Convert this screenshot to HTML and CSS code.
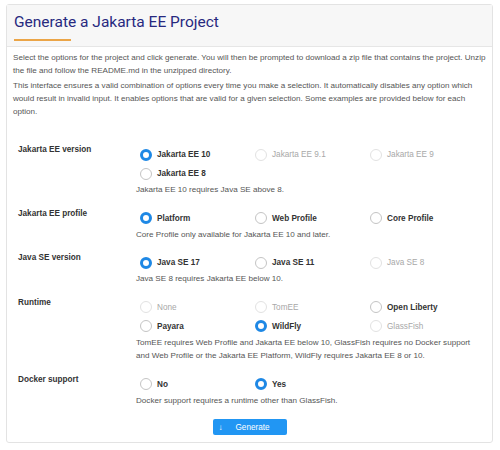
FILE: index.html
```html
<!DOCTYPE html>
<html>
<head>
<meta charset="utf-8">
<link rel="stylesheet" href="styles.css">
</head>
<body>
<div class="card">
  <div class="card-header">
    <h1>Generate a Jakarta EE Project</h1>
    <div class="accent"></div>
  </div>
  <div class="card-body">
    <p>Select the options for the project and click generate. You will then be prompted to download a zip file that contains the project. Unzip the file and follow the README.md in the unzipped directory.</p>
    <p>This interface ensures a valid combination of options every time you make a selection. It automatically disables any option which would result in invalid input. It enables options that are valid for a given selection. Some examples are provided below for each option.</p>

    <div class="form">
      <div class="field">
        <div class="label">Jakarta EE version</div>
        <div class="control">
          <div class="options">
            <div class="opt checked"><span class="radio"></span>Jakarta EE 10</div>
            <div class="opt disabled"><span class="radio"></span>Jakarta EE 9.1</div>
            <div class="opt disabled"><span class="radio"></span>Jakarta EE 9</div>
            <div class="opt"><span class="radio"></span>Jakarta EE 8</div>
          </div>
          <div class="help">Jakarta EE 10 requires Java SE above 8.</div>
        </div>
      </div>

      <div class="field">
        <div class="label">Jakarta EE profile</div>
        <div class="control">
          <div class="options">
            <div class="opt checked"><span class="radio"></span>Platform</div>
            <div class="opt"><span class="radio"></span>Web Profile</div>
            <div class="opt"><span class="radio"></span>Core Profile</div>
          </div>
          <div class="help">Core Profile only available for Jakarta EE 10 and later.</div>
        </div>
      </div>

      <div class="field">
        <div class="label">Java SE version</div>
        <div class="control">
          <div class="options">
            <div class="opt checked"><span class="radio"></span>Java SE 17</div>
            <div class="opt"><span class="radio"></span>Java SE 11</div>
            <div class="opt disabled"><span class="radio"></span>Java SE 8</div>
          </div>
          <div class="help">Java SE 8 requires Jakarta EE below 10.</div>
        </div>
      </div>

      <div class="field">
        <div class="label">Runtime</div>
        <div class="control">
          <div class="options">
            <div class="opt disabled"><span class="radio"></span>None</div>
            <div class="opt disabled"><span class="radio"></span>TomEE</div>
            <div class="opt"><span class="radio"></span>Open Liberty</div>
            <div class="opt"><span class="radio"></span>Payara</div>
            <div class="opt checked"><span class="radio"></span>WildFly</div>
            <div class="opt disabled"><span class="radio"></span>GlassFish</div>
          </div>
          <div class="help">TomEE requires Web Profile and Jakarta EE below 10, GlassFish requires no Docker support and Web Profile or the Jakarta EE Platform, WildFly requires Jakarta EE 8 or 10.</div>
        </div>
      </div>

      <div class="field">
        <div class="label">Docker support</div>
        <div class="control">
          <div class="options">
            <div class="opt"><span class="radio"></span>No</div>
            <div class="opt checked"><span class="radio"></span>Yes</div>
          </div>
          <div class="help">Docker support requires a runtime other than GlassFish.</div>
        </div>
      </div>
    </div>

    <div class="actions">
      <button class="btn"><span class="arrow">↓</span><span class="btn-text">Generate</span></button>
    </div>
  </div>
</div>
</body>
</html>
```

FILE: styles.css
```css
html, body {
  margin: 0;
  padding: 0;
  background: #ffffff;
}
body {
  padding: 4px 7px 0 6px;
  font-family: "Liberation Sans", Arial, sans-serif;
  color: #444;
}
.card {
  border: 1px solid #e3e3e3;
  border-radius: 3px;
  background: #fff;
}
.card-header {
  background: #f7f7f7;
  border-bottom: 1px solid #e6e6e6;
  padding: 7px 7px 5px;
}
.card-header h1 {
  margin: 0;
  font-family: Roboto, "Liberation Sans", sans-serif;
  font-size: 15.5px;
  line-height: 20px;
  font-weight: normal;
  color: #27297f;
}
.accent {
  width: 57px;
  height: 2px;
  background: #eba547;
  margin-top: 7px;
}
.card-body {
  padding: 4px 3px 7px 6px;
}
.card-body p {
  margin: 0 0 2px;
  font-size: 8.1px;
  line-height: 13px;
  color: #555;
}
.form {
  margin-top: 25px;
  padding: 0 4px 0 5px;
  display: flex;
  flex-direction: column;
  gap: 10px;
}
.field {
  display: grid;
  grid-template-columns: 118px 1fr;
}
.label {
  font-size: 8.2px;
  line-height: 13px;
  font-weight: bold;
  color: #333;
}
.options {
  margin-top: 2px;
  display: grid;
  grid-template-columns: 115px 115px 115px;
}
.opt {
  display: flex;
  align-items: center;
  height: 19px;
  padding-left: 4px;
  font-size: 8.2px;
  font-weight: bold;
  color: #333;
}
.radio {
  box-sizing: border-box;
  width: 12px;
  height: 12px;
  border-radius: 50%;
  border: 1px solid #c4c4c4;
  background: #fff;
  margin-right: 5px;
  flex: none;
}
.opt.checked .radio {
  border: 3px solid #1e88e5;
}
.opt.disabled {
  color: #a8a8a8;
  font-weight: normal;
}
.opt.disabled .radio {
  border-color: #e2e2e2;
}
.help {
  font-size: 8.1px;
  line-height: 13.5px;
  color: #555;
}
.actions {
  display: flex;
  justify-content: center;
  margin-top: 12px;
  padding-right: 3px;
}
.btn {
  width: 74px;
  height: 16px;
  border: none;
  border-radius: 2px;
  background: #2196f3;
  color: #fff;
  font-family: "Liberation Sans", Arial, sans-serif;
  font-size: 8.2px;
  padding: 0 6px;
  display: flex;
  align-items: center;
}
.arrow {
  font-size: 8px;
  width: 17px;
  text-align: left;
}
.btn-text {
  flex: 1;
  text-align: left;
}
```
